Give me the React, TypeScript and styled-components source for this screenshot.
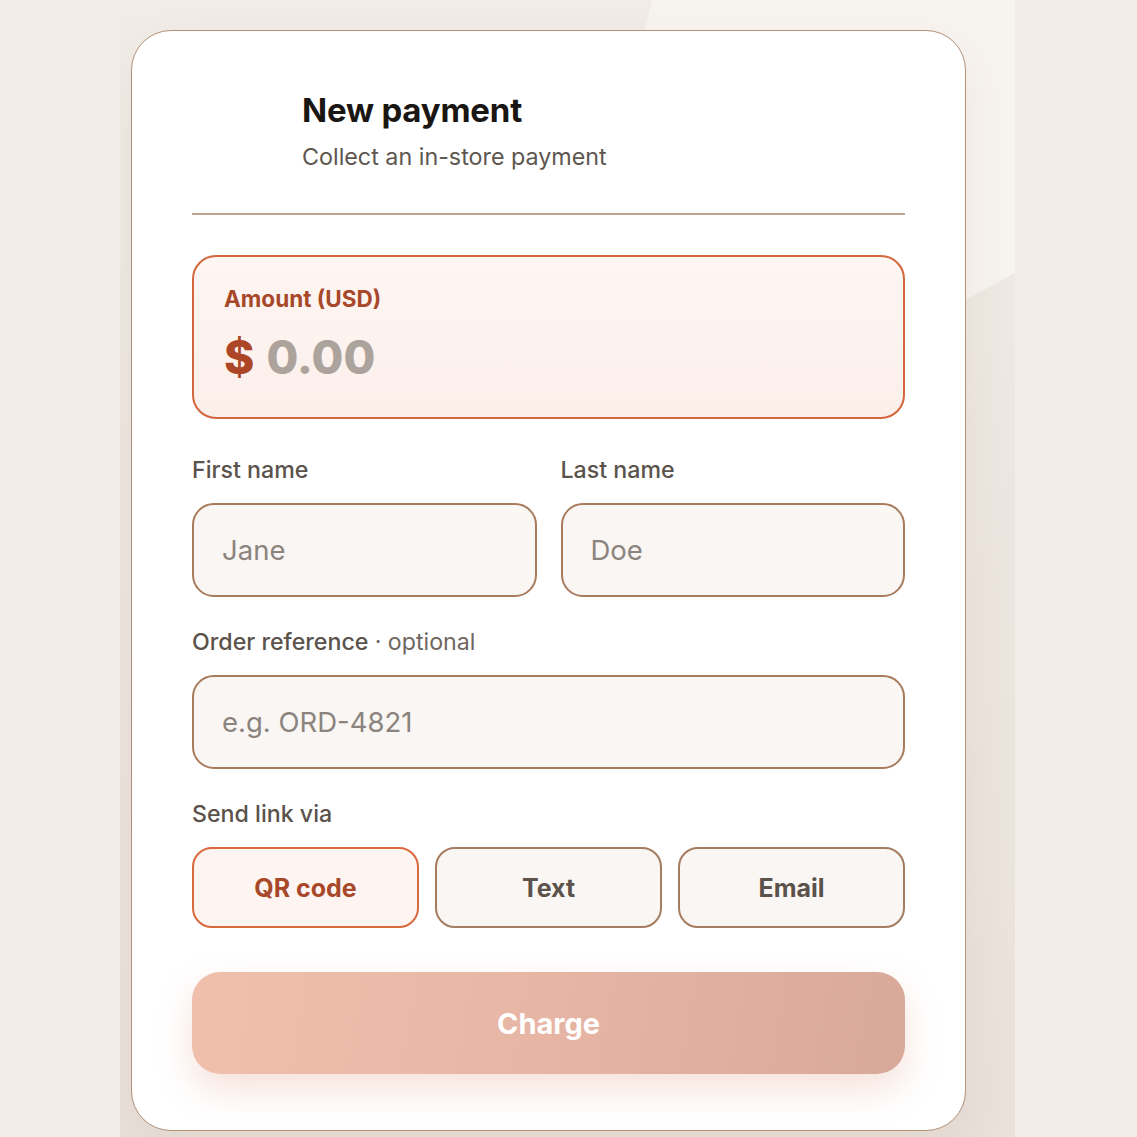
import React, { useState } from 'react';
import styled, { createGlobalStyle } from 'styled-components';

const GlobalStyle = createGlobalStyle`
  * { box-sizing: border-box; }
  html, body {
    margin: 0;
    padding: 0;
    background: #f2ede8;
    font-family: Inter, "Noto Sans", "Liberation Sans", sans-serif;
    color: #1c1815;
  }
  body { overflow: hidden; }
`;

const methods = ['QR code', 'Text', 'Email'];

const App: React.FC = () => {
  const [method, setMethod] = useState('QR code');
  return (
    <>
      <GlobalStyle />
      <Page>
        <Panel>
          <Card>
            <Header>
              <Title>New payment</Title>
              <Subtitle>Collect an in-store payment</Subtitle>
            </Header>
            <Divider />
            <AmountBox>
              <AmountLabel>Amount (USD)</AmountLabel>
              <AmountValue>
                <Currency>$</Currency>
                <AmountInput placeholder="0.00" />
              </AmountValue>
            </AmountBox>
            <NameRow>
              <Field>
                <Label>First name</Label>
                <Input placeholder="Jane" />
              </Field>
              <Field>
                <Label>Last name</Label>
                <Input placeholder="Doe" />
              </Field>
            </NameRow>
            <Field $spaced>
              <Label>
                Order reference <Optional>· optional</Optional>
              </Label>
              <Input placeholder="e.g. ORD-4821" />
            </Field>
            <Field $spaced>
              <Label>Send link via</Label>
              <Segments>
                {methods.map((m) => (
                  <Segment
                    key={m}
                    $selected={method === m}
                    onClick={() => setMethod(m)}
                  >
                    {m}
                  </Segment>
                ))}
              </Segments>
            </Field>
            <ChargeButton>Charge</ChargeButton>
          </Card>
        </Panel>
      </Page>
    </>
  );
};

const Page = styled.div`
  display: flex;
  padding-left: 120px;
  min-height: 100vh;
`;

const Panel = styled.div`
  position: relative;
  width: 895px;
  min-height: 100vh;
  padding: 30px 0 0 11px;
  background: linear-gradient(180deg, #f1ece7 0%, #ede6e0 45%, #e9e1da 100%);
  overflow: hidden;

  &::before {
    content: '';
    position: absolute;
    inset: 0;
    background: #f7f3ef;
    clip-path: polygon(59.5% 0, 100% 0, 100% 273px, 43% 550px);
  }
`;

const Card = styled.div`
  position: relative;
  width: 835px;
  padding: 60px 60px 56px 60px;
  background: #ffffff;
  border: 1px solid #b3917a;
  border-radius: 40px;
  box-shadow: 0 20px 50px rgba(120, 85, 60, 0.07);
`;

const Header = styled.div`
  display: flex;
  flex-direction: column;
  gap: 14px;
  padding-left: 110px;
`;

const Title = styled.h1`
  margin: 0;
  font-size: 33px;
  line-height: 38px;
  font-weight: 700;
  letter-spacing: -0.2px;
  color: #1a1613;
`;

const Subtitle = styled.p`
  margin: 0;
  font-size: 23.3px;
  line-height: 28px;
  color: #5e564f;
`;

const Divider = styled.hr`
  margin: 42px 0 0 0;
  height: 2px;
  border: 0;
  background: #bca594;
`;

const AmountBox = styled.div`
  display: flex;
  flex-direction: column;
  gap: 19px;
  margin-top: 40px;
  height: 164px;
  padding: 29px 30px 0 30px;
  border: 2px solid #d2663d;
  border-radius: 24px;
  background: linear-gradient(180deg, #fef6f3 0%, #fbefea 100%);
`;

const AmountLabel = styled.div`
  font-size: 22.5px;
  line-height: 26px;
  font-weight: 700;
  color: #a8482a;
`;

const AmountValue = styled.div`
  display: flex;
  align-items: center;
  gap: 12px;
  height: 52px;
`;

const Currency = styled.span`
  font-size: 46px;
  line-height: 52px;
  font-weight: 800;
  color: #ad4627;
`;

const AmountInput = styled.input`
  flex: 1;
  min-width: 0;
  border: 0;
  outline: none;
  background: transparent;
  font-family: inherit;
  font-size: 46px;
  line-height: 52px;
  font-weight: 800;
  color: #1a1613;
  padding: 0;

  &::placeholder {
    color: #aca39c;
  }
`;

const NameRow = styled.div`
  display: grid;
  grid-template-columns: 1fr 1fr;
  gap: 24px;
  margin-top: 38px;
`;

const Field = styled.div<{ $spaced?: boolean }>`
  display: flex;
  flex-direction: column;
  gap: 20px;
  margin-top: ${({ $spaced }) => ($spaced ? '32px' : '0')};
`;

const Label = styled.label`
  font-size: 23.2px;
  line-height: 26px;
  font-weight: 500;
  color: #5a524b;
`;

const Optional = styled.span`
  font-weight: 400;
  color: #6f675f;
`;

const Input = styled.input`
  height: 94px;
  width: 100%;
  padding: 0 28px;
  border: 2px solid #a87b5c;
  border-radius: 22px;
  background: #faf6f3;
  font-family: inherit;
  font-size: 27.5px;
  color: #1a1613;
  outline: none;

  &::placeholder {
    color: #8b847e;
  }
`;

const Segments = styled.div`
  display: grid;
  grid-template-columns: repeat(3, 1fr);
  gap: 16px;
`;

const Segment = styled.button<{ $selected?: boolean }>`
  height: 81px;
  border-radius: 20px;
  border: 2px solid ${({ $selected }) => ($selected ? '#d9693f' : '#a47c5f')};
  background: ${({ $selected }) => ($selected ? '#fef5f2' : '#faf6f3')};
  color: ${({ $selected }) => ($selected ? '#a8482a' : '#5a524b')};
  font-family: inherit;
  font-size: 25px;
  font-weight: 700;
  cursor: pointer;
`;

const ChargeButton = styled.button`
  margin-top: 44px;
  height: 102px;
  width: 100%;
  border: 0;
  border-radius: 28px;
  background: linear-gradient(100deg, #f0c0ad 0%, #e6b5a4 50%, #d8a899 100%);
  box-shadow: 0 16px 34px rgba(222, 150, 125, 0.28);
  color: #ffffff;
  font-family: inherit;
  font-size: 29px;
  font-weight: 700;
  cursor: pointer;
`;

export default App;
